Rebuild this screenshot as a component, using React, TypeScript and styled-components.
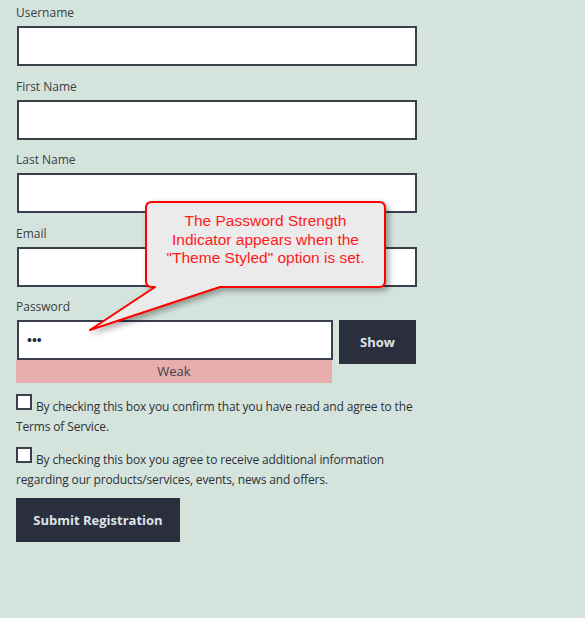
import React from "react";
import styled, { createGlobalStyle } from "styled-components";

const GlobalStyle = createGlobalStyle`
  html, body {
    margin: 0;
    padding: 0;
    background: #d4e4dc;
  }
  body {
    font-family: "Open Sans", "Noto Sans", sans-serif;
  }
`;

const Page = styled.div`
  position: relative;
  width: 585px;
  height: 618px;
  padding: 3px 0 0 16px;
  box-sizing: border-box;
  background: #d4e4dc;
`;

const Form = styled.form`
  width: 401px;
`;

const Field = styled.div`
  margin-bottom: 10.5px;
`;

const Label = styled.label`
  display: block;
  font-size: 12px;
  line-height: 20px;
  color: #3b3d42;
  margin-bottom: 3px;
`;

const TextInput = styled.input<{ $width?: number }>`
  display: block;
  box-sizing: border-box;
  width: ${(p) => p.$width ?? 400}px;
  height: 40px;
  margin: 0 0 0 1px;
  padding: 0 8px;
  border: 2px solid #3a3f4b;
  background: #fff;
  font-size: 14px;
  color: #2a2d3c;
  outline: none;
`;

const PasswordRow = styled.div`
  display: flex;
  align-items: flex-start;
  gap: 6px;
`;

const PasswordColumn = styled.div`
  display: flex;
  flex-direction: column;
`;

const Strength = styled.div`
  width: 316px;
  height: 23px;
  line-height: 23px;
  text-align: center;
  font-size: 13px;
  color: #3d3f4a;
  background: #e8adad;
`;

const DarkButton = styled.button<{ $width: number }>`
  width: ${(p) => p.$width}px;
  height: 44px;
  border: none;
  padding: 0;
  background: #2a2e3d;
  color: #dde4e6;
  font-family: inherit;
  font-size: 13px;
  font-weight: 700;
  cursor: pointer;
`;

const CheckRow = styled.div<{ $top: number }>`
  margin-top: ${(p) => p.$top}px;
  font-size: 12px;
  letter-spacing: -0.15px;
  line-height: 20px;
  color: #2d3039;
`;

const Box = styled.span`
  display: inline-block;
  box-sizing: border-box;
  width: 16px;
  height: 16px;
  margin-right: 4px;
  border: 2px solid #3a3f4b;
  background: #fff;
  vertical-align: 1px;
`;

const SubmitWrap = styled.div`
  margin-top: 8px;
`;

const Callout = styled.svg`
  position: absolute;
  left: 80px;
  top: 195px;
  overflow: visible;
`;

const CalloutText = styled.div`
  position: absolute;
  left: 146px;
  top: 202px;
  width: 239px;
  padding-top: 10px;
  box-sizing: border-box;
  text-align: center;
  font-family: "Liberation Sans", Arial, sans-serif;
  font-size: 15.5px;
  line-height: 18.5px;
  color: #ff1a1a;
`;

const fields = ["Username", "First Name", "Last Name", "Email"];

export default function App() {
  return (
    <Page>
      <GlobalStyle />
      <Form onSubmit={(e) => e.preventDefault()}>
        {fields.map((name) => (
          <Field key={name}>
            <Label>{name}</Label>
            <TextInput type="text" />
          </Field>
        ))}
        <Field>
          <Label>Password</Label>
          <PasswordRow>
            <PasswordColumn>
              <TextInput type="password" $width={316} defaultValue="abc" />
              <Strength>Weak</Strength>
            </PasswordColumn>
            <DarkButton type="button" $width={77}>
              Show
            </DarkButton>
          </PasswordRow>
        </Field>
        <CheckRow $top={0}>
          <Box />
          By checking this box you confirm that you have read and agree to the
          Terms of Service.
        </CheckRow>
        <CheckRow $top={10}>
          <Box />
          By checking this box you agree to receive additional information
          regarding our products/services, events, news and offers.
        </CheckRow>
        <SubmitWrap>
          <DarkButton type="submit" $width={164}>
            Submit Registration
          </DarkButton>
        </SubmitWrap>
      </Form>

      <Callout width="320" height="145" viewBox="0 0 320 145">
        <defs>
          <filter id="shadow" x="-20%" y="-20%" width="140%" height="150%">
            <feDropShadow dx="3" dy="3" stdDeviation="3" floodColor="#000" floodOpacity="0.35" />
          </filter>
        </defs>
        <path
          d="M72,7 H299 Q305,7 305,13 V86 Q305,92 299,92 H140 L10,135 L75,92 H72 Q66,92 66,86 V13 Q66,7 72,7 Z"
          fill="#ebebeb"
          stroke="#ff0000"
          strokeWidth="2"
          strokeLinejoin="round"
          filter="url(#shadow)"
        />
      </Callout>
      <CalloutText>
        The Password Strength
        <br />
        Indicator appears when the
        <br />
        "Theme Styled" option is set.
      </CalloutText>
    </Page>
  );
}
